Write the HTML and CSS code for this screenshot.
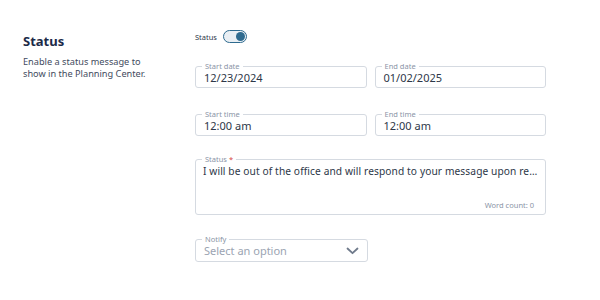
FILE: index.html
```html
<!DOCTYPE html>
<html lang="en">
<head>
  <meta charset="UTF-8">
  <title>Status</title>
  <link rel="stylesheet" href="styles.css">
</head>
<body>
  <div class="ajustes">
    <div class="intro">
      <h2>Status</h2>
      <p>Enable a status message to show in the Planning Center.</p>
    </div>

    <div class="formulario">
      <div class="fila-toggle">
        <span class="toggle-label">Status</span>
        <span class="toggle"><span class="knob"></span></span>
      </div>

      <div class="fila fila-fechas">
        <div class="campo">
          <span class="etiqueta">Start date</span>
          <span class="valor">12/23/2024</span>
        </div>
        <div class="campo">
          <span class="etiqueta">End date</span>
          <span class="valor">01/02/2025</span>
        </div>
      </div>

      <div class="fila fila-horas">
        <div class="campo">
          <span class="etiqueta">Start time</span>
          <span class="valor">12:00 am</span>
        </div>
        <div class="campo">
          <span class="etiqueta">End time</span>
          <span class="valor">12:00 am</span>
        </div>
      </div>

      <div class="campo area">
        <span class="etiqueta">Status <b class="req">*</b></span>
        <div class="texto">I will be out of the office and will respond to your message upon return on 01/02/2025.</div>
        <span class="contador">Word count: 0</span>
      </div>

      <div class="campo select">
        <span class="etiqueta">Notify</span>
        <span class="valor placeholder">Select an option</span>
        <svg class="chevron" width="13" height="8" viewBox="0 0 13 8">
          <path d="M1.5 1.5 L6.5 6.2 L11.5 1.5" fill="none" stroke="#6f7a8b" stroke-width="1.8" stroke-linecap="round" stroke-linejoin="round"/>
        </svg>
      </div>
    </div>
  </div>
</body>
</html>
```

FILE: styles.css
```css
body { margin: 0; font-family: "Noto Sans", "Open Sans", sans-serif; background: #fff; color: #2d3748; }
.ajustes { display: flex; padding: 30px 0 0 23px; }
.intro { width: 172px; }
.intro h2 { margin: 3px 0 0; font-size: 13px; line-height: 16px; font-weight: 700; color: #1c2a48; }
.intro p { margin: 7px 0 0; font-size: 9.2px; line-height: 12px; color: #3f4b5e; width: 128px; }
.formulario { width: 351px; }
.fila-toggle { display: flex; align-items: center; height: 13px; }
.toggle-label { font-size: 7.5px; color: #2d3748; margin-right: 6px; }
.toggle { display: flex; align-items: center; justify-content: flex-end; width: 24px; height: 13px; box-sizing: border-box; border: 1px solid #2f6b8f; border-radius: 7px; background: #e9eff4; padding: 1px; }
.knob { width: 9px; height: 9px; border-radius: 50%; background: #2f6b8f; }
.fila { display: flex; gap: 8px; }
.fila .campo { flex: 1; }
.fila-fechas { margin-top: 23px; }
.fila-horas { margin-top: 26px; }
.campo { position: relative; height: 22px; box-sizing: border-box; border: 1px solid #d5dae1; border-radius: 3px; padding: 0 8px; display: flex; align-items: center; }
.etiqueta { position: absolute; top: -6px; left: 6px; background: #fff; padding: 0 3px; font-size: 7.5px; line-height: 10px; color: #8a94a6; }
.req { color: #d64545; font-weight: 400; }
.valor { font-size: 11px; color: #2d3748; padding-top: 1px; }
.area { display: block; height: 56px; margin-top: 23px; padding: 4px 6px 0 7px; }
.texto { font-size: 10.2px; line-height: 14px; letter-spacing: 0.1px; color: #2d3748; white-space: nowrap; overflow: hidden; text-overflow: ellipsis; }
.contador { position: absolute; right: 11px; bottom: 4px; font-size: 7.5px; color: #8a94a6; }
.select { width: 173px; margin-top: 24px; height: 23px; justify-content: space-between; padding-right: 8px; }
.placeholder { color: #9ba4b2; padding-top: 0; }
```
